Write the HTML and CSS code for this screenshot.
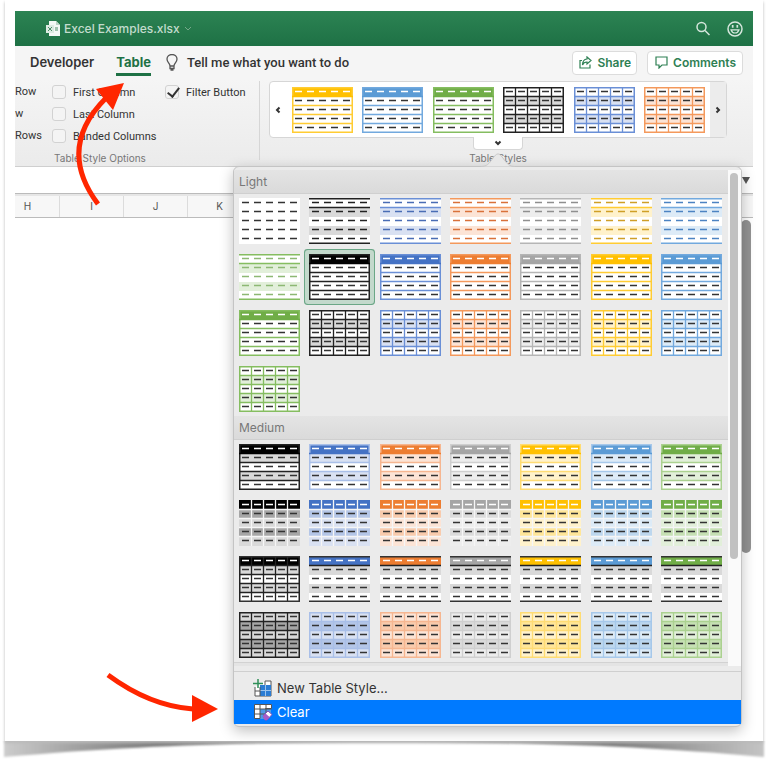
FILE: index.html
```
<!DOCTYPE html>
<html lang="en">
<head>
    <meta charset="UTF-8">
    <meta name="viewport" content="width=device-width, initial-scale=1.0">
    <title>Excel Examples.xlsx</title>
    <link rel="stylesheet" href="styles.css">
</head>
<body>
    <!-- Shared table thumbnail, coloured with CSS variables -->
    <svg class="defs" aria-hidden="true">
        <symbol id="thumb" viewBox="0 0 61 46">
            <rect class="t-head" width="61" height="10"/>
            <path class="t-odd" d="M0 10h61v9H0zM0 28h61v9H0z"/>
            <path class="t-even" d="M0 19h61v9H0zM0 37h61v9H0z"/>
            <path class="t-row" d="M0 18.5h61M0 27.5h61M0 36.5h61"/>
            <path class="t-col" d="M12.5 0v46M24.5 0v46M36.5 0v46M48.5 0v46"/>
            <path class="t-side" d="M.5 0v46M60.5 0v46"/>
            <path class="t-line" d="M0 9.5h61"/>
            <path class="t-edge" d="M0 .5h61M0 45.5h61"/>
            <path class="t-hdash" d="M3 4.5h7M15 4.5h7M27 4.5h7M39 4.5h7M51 4.5h7"/>
            <path class="t-dash" d="M3 13.5h7M15 13.5h7M27 13.5h7M39 13.5h7M51 13.5h7M3 22.5h7M15 22.5h7M27 22.5h7M39 22.5h7M51 22.5h7M3 31.5h7M15 31.5h7M27 31.5h7M39 31.5h7M51 31.5h7M3 40.5h7M15 40.5h7M27 40.5h7M39 40.5h7M51 40.5h7"/>
        </symbol>
    </svg>

    <div class="card">
        <div class="app">
            <header class="titlebar">
                <div class="doc">
                    <svg width="14" height="16" viewBox="0 0 14 16">
                        <path d="M3 0h7l4 4v11H3z" fill="#f3f8f5"/>
                        <path d="M10 0v4h4" fill="#b9d3c4"/>
                        <rect y="4" width="8" height="8" fill="#dbeae1"/>
                        <path d="M2 6l4 4M6 6l-4 4M9 7h3M9 9h3" stroke="#4b8c67" fill="none"/>
                    </svg>
                    <span>Excel Examples.xlsx</span>
                    <svg width="8" height="5" viewBox="0 0 8 5"><path d="M1 1l3 3 3-3" stroke="#76a88a" fill="none"/></svg>
                </div>
                <button class="icon-btn" aria-label="Search">
                    <svg width="16" height="16" viewBox="0 0 16 16" fill="none" stroke="#d5e6dc" stroke-width="1.5"><circle cx="6.5" cy="6" r="4.5"/><path d="M10 9.5l4.500 4.500"/></svg>
                </button>
                <button class="icon-btn" aria-label="Feedback">
                    <svg width="16" height="16" viewBox="0 0 16 16" fill="none" stroke="#d5e6dc" stroke-width="1.5"><circle cx="8" cy="8" r="7"/><path d="M4 8.800q1 3.200 4 3.200t4-3.200z" stroke-width="1.200"/><path d="M5.700 4v2.800M10.300 4v2.800" stroke-width="1.700"/></svg>
                </button>
            </header>

            <nav class="tabs">
                <a href="#" class="tab">Developer</a>
                <a href="#" class="tab active">Table</a>
                <a href="#" class="tell">
                    <svg width="12" height="17" viewBox="0 0 12 17" fill="none" stroke="#555" stroke-width="1.3"><path d="M4 12c0-3-3-3.500-3-7a5 4.500 0 0 1 10 0c0 3.500-3 4-3 7zM4 12v2.500h4V12M4.500 16h3"/></svg>
                    <span>Tell me what you want to do</span>
                </a>
                <button class="pill share">
                    <svg width="13" height="13" viewBox="0 0 13 13" fill="none" stroke="#2f8054" stroke-width="1.200"><path d="M3 4.500H1v7.500h10V8.500"/><path d="M8 1l4 3.500L8 8V6C5.500 6 4.200 7 3.500 9 3.500 5.500 5 3.300 8 3z"/></svg>
                    Share
                </button>
                <button class="pill">
                    <svg width="13" height="13" viewBox="0 0 13 13" fill="none" stroke="#2f8054" stroke-width="1.200"><path d="M1 1h11v8H7l-3 3V9H1z"/></svg>
                    Comments
                </button>
            </nav>

            <div class="ribbon">
                <div class="options">
                    <div class="option-cols">
                        <div class="cut">
                            <span>Row</span>
                            <span>w</span>
                            <span>Rows</span>
                        </div>
                        <div class="checks">
                            <label><input type="checkbox">First Column</label>
                            <label><input type="checkbox">Last Column</label>
                            <label><input type="checkbox">Banded Columns</label>
                        </div>
                        <div class="checks">
                            <label><input type="checkbox" checked>Filter Button</label>
                        </div>
                    </div>
                    <p class="group-name options-name">Table Style Options</p>
                </div>
                <div class="styles">
                    <div class="strip">
                        <button class="scroll-btn" aria-label="Previous"><svg width="6" height="8" viewBox="0 0 6 8"><path d="M4.500 1.500L2 4l2.500 2.500"/></svg></button>
                        <div class="strip-items">
                            <button class="thumb rows gold" aria-label="Gold rows"><svg><use href="#thumb"/></svg></button>
                            <button class="thumb rows sky" aria-label="Sky rows"><svg><use href="#thumb"/></svg></button>
                            <button class="thumb rows green" aria-label="Green rows"><svg><use href="#thumb"/></svg></button>
                            <button class="thumb grid black" aria-label="Black grid"><svg><use href="#thumb"/></svg></button>
                            <button class="thumb grid blue" aria-label="Blue grid"><svg><use href="#thumb"/></svg></button>
                            <button class="thumb grid orange" aria-label="Orange grid"><svg><use href="#thumb"/></svg></button>
                        </div>
                        <button class="scroll-btn next" aria-label="Next"><svg width="6" height="8" viewBox="0 0 6 8"><path d="M1.500 1.500L4 4 1.500 6.500"/></svg></button>
                    </div>
                    <button class="more" aria-label="More styles"><svg width="8" height="6" viewBox="0 0 8 6"><path d="M1.500 1.500L4 4l2.500-2.500"/></svg></button>
                    <p class="group-name">Table Styles</p>
                </div>
            </div>

            <div class="formula">
                <button class="expand" aria-label="Expand formula bar"><svg width="8" height="7" viewBox="0 0 8 7"><path d="M0 0h8L4 7z" fill="#555"/></svg></button>
            </div>
            <div class="columns">
                <span>H</span>
                <span>I</span>
                <span>J</span>
                <span>K</span>
            </div>
            <div class="sheet">
                <div class="sheet-bar"></div>
            </div>

            <!-- Table styles menu -->
            <div class="popup">
                <svg class="pointer" width="34" height="14" viewBox="0 0 34 14"><path d="M0 13.500c6 0 8-3 11-7S15 1 17 1s3 1.500 6 5.500 5 7 11 7" fill="#e8e8e8" stroke="#c9c9c9"/></svg>
                <div class="scroller">
                    <div class="list">
                        <h2>Light</h2>
                        <div class="gallery">
                            <button class="thumb plain black" aria-label="None"><svg><use href="#thumb"/></svg></button>
                            <button class="thumb banded black" aria-label="Light 1"><svg><use href="#thumb"/></svg></button>
                            <button class="thumb banded blue" aria-label="Light 2"><svg><use href="#thumb"/></svg></button>
                            <button class="thumb banded orange" aria-label="Light 3"><svg><use href="#thumb"/></svg></button>
                            <button class="thumb banded gray" aria-label="Light 4"><svg><use href="#thumb"/></svg></button>
                            <button class="thumb banded gold" aria-label="Light 5"><svg><use href="#thumb"/></svg></button>
                            <button class="thumb banded sky" aria-label="Light 6"><svg><use href="#thumb"/></svg></button>
                            <button class="thumb banded green" aria-label="Light 7"><svg><use href="#thumb"/></svg></button>
                            <button class="thumb rows black selected" aria-label="Light 8"><svg><use href="#thumb"/></svg></button>
                            <button class="thumb rows blue" aria-label="Light 9"><svg><use href="#thumb"/></svg></button>
                            <button class="thumb rows orange" aria-label="Light 10"><svg><use href="#thumb"/></svg></button>
                            <button class="thumb rows gray" aria-label="Light 11"><svg><use href="#thumb"/></svg></button>
                            <button class="thumb rows gold" aria-label="Light 12"><svg><use href="#thumb"/></svg></button>
                            <button class="thumb rows sky" aria-label="Light 13"><svg><use href="#thumb"/></svg></button>
                            <button class="thumb rows green" aria-label="Light 14"><svg><use href="#thumb"/></svg></button>
                            <button class="thumb grid black" aria-label="Light 15"><svg><use href="#thumb"/></svg></button>
                            <button class="thumb grid blue" aria-label="Light 16"><svg><use href="#thumb"/></svg></button>
                            <button class="thumb grid orange" aria-label="Light 17"><svg><use href="#thumb"/></svg></button>
                            <button class="thumb grid gray" aria-label="Light 18"><svg><use href="#thumb"/></svg></button>
                            <button class="thumb grid gold" aria-label="Light 19"><svg><use href="#thumb"/></svg></button>
                            <button class="thumb grid sky" aria-label="Light 20"><svg><use href="#thumb"/></svg></button>
                            <button class="thumb grid green" aria-label="Light 21"><svg><use href="#thumb"/></svg></button>
                        </div>
                        <h2>Medium</h2>
                        <div class="gallery">
                            <button class="thumb medium black" aria-label="Medium 1"><svg><use href="#thumb"/></svg></button>
                            <button class="thumb medium blue" aria-label="Medium 2"><svg><use href="#thumb"/></svg></button>
                            <button class="thumb medium orange" aria-label="Medium 3"><svg><use href="#thumb"/></svg></button>
                            <button class="thumb medium gray" aria-label="Medium 4"><svg><use href="#thumb"/></svg></button>
                            <button class="thumb medium gold" aria-label="Medium 5"><svg><use href="#thumb"/></svg></button>
                            <button class="thumb medium sky" aria-label="Medium 6"><svg><use href="#thumb"/></svg></button>
                            <button class="thumb medium green" aria-label="Medium 7"><svg><use href="#thumb"/></svg></button>
                            <button class="thumb tiles black" aria-label="Medium 8"><svg><use href="#thumb"/></svg></button>
                            <button class="thumb tiles blue" aria-label="Medium 9"><svg><use href="#thumb"/></svg></button>
                            <button class="thumb tiles orange" aria-label="Medium 10"><svg><use href="#thumb"/></svg></button>
                            <button class="thumb tiles gray" aria-label="Medium 11"><svg><use href="#thumb"/></svg></button>
                            <button class="thumb tiles gold" aria-label="Medium 12"><svg><use href="#thumb"/></svg></button>
                            <button class="thumb tiles sky" aria-label="Medium 13"><svg><use href="#thumb"/></svg></button>
                            <button class="thumb tiles green" aria-label="Medium 14"><svg><use href="#thumb"/></svg></button>
                            <button class="thumb ruled black" aria-label="Medium 15"><svg><use href="#thumb"/></svg></button>
                            <button class="thumb ruled blue" aria-label="Medium 16"><svg><use href="#thumb"/></svg></button>
                            <button class="thumb ruled orange" aria-label="Medium 17"><svg><use href="#thumb"/></svg></button>
                            <button class="thumb ruled gray" aria-label="Medium 18"><svg><use href="#thumb"/></svg></button>
                            <button class="thumb ruled gold" aria-label="Medium 19"><svg><use href="#thumb"/></svg></button>
                            <button class="thumb ruled sky" aria-label="Medium 20"><svg><use href="#thumb"/></svg></button>
                            <button class="thumb ruled green" aria-label="Medium 21"><svg><use href="#thumb"/></svg></button>
                            <button class="thumb filled black" aria-label="Medium 22"><svg><use href="#thumb"/></svg></button>
                            <button class="thumb filled blue" aria-label="Medium 23"><svg><use href="#thumb"/></svg></button>
                            <button class="thumb filled orange" aria-label="Medium 24"><svg><use href="#thumb"/></svg></button>
                            <button class="thumb filled gray" aria-label="Medium 25"><svg><use href="#thumb"/></svg></button>
                            <button class="thumb filled gold" aria-label="Medium 26"><svg><use href="#thumb"/></svg></button>
                            <button class="thumb filled sky" aria-label="Medium 27"><svg><use href="#thumb"/></svg></button>
                            <button class="thumb filled green" aria-label="Medium 28"><svg><use href="#thumb"/></svg></button>
                        </div>
                        <div class="list-end"></div>
                    </div>
                    <div class="track"><div class="track-thumb"></div></div>
                </div>
                <div class="menu">
                    <button class="menu-item">
                        <svg width="20" height="18" viewBox="0 0 20 18">
                            <path d="M2 8v9h16V2h-6" fill="#fff" stroke="#555"/>
                            <path d="M7 6h11v11H7z" fill="#2b7cd3"/>
                            <path d="M7 11.500h11M12.500 6v11" stroke="#9cc5ee"/>
                            <path d="M2 12h5M7 8v9M12 2v4" stroke="#555"/>
                            <path d="M5 0v9M0 4.500h10" stroke="#2f8f57" stroke-width="1.500"/>
                        </svg>
                        New Table Style...
                    </button>
                    <button class="menu-item current">
                        <svg width="20" height="18" viewBox="0 0 20 18">
                            <path d="M1.500 1.500h17v4h-6v10h-11z" fill="#fff" stroke="#555"/>
                            <path d="M7 6h11v5l-6 5H7z" fill="#4f9be8"/>
                            <path d="M1.500 6h17M1.500 11h11M7 1.500v14M13 1.500v9" stroke="#555"/>
                            <path d="M10 13l5-5 4 3.500-5 5.500h-2z" fill="#fff" stroke="#8a4fb5"/>
                            <path d="M10 13l2.500-2.500 4 3.500-2.500 3h-2z" fill="#a55cc9"/>
                        </svg>
                        Clear
                    </button>
                </div>
            </div>
        </div>

        <svg class="arrow arrow-up" width="50" height="126" viewBox="0 0 50 126">
            <path d="M23 122Q-19 66 31 16" fill="none" stroke="#ff2600" stroke-width="5"/>
            <path d="M49 1L21 7l17 21z" fill="#ff2600"/>
        </svg>
        <svg class="arrow arrow-right" width="114" height="52" viewBox="0 0 114 52">
            <path d="M3 5Q45 36 88 39" fill="none" stroke="#ff2600" stroke-width="5"/>
            <path d="M113 39L87 25v27z" fill="#ff2600"/>
        </svg>
    </div>

    <!-- Curled paper shadow under the card -->
    <svg class="curl" viewBox="0 0 768 19" preserveAspectRatio="none" aria-hidden="true">
        <defs>
            <linearGradient id="curl-fill">
                <stop offset="0" stop-color="#cccccc"/>
                <stop offset=".08" stop-color="#a8a8a8"/>
                <stop offset=".2" stop-color="#787878"/>
                <stop offset=".5" stop-color="#a0a0a0"/>
                <stop offset=".8" stop-color="#787878"/>
                <stop offset=".92" stop-color="#a8a8a8"/>
                <stop offset="1" stop-color="#c4c4c4"/>
            </linearGradient>
            <filter id="soft" x="-5%" y="-50%" width="110%" height="200%"><feGaussianBlur stdDeviation="1"/></filter>
        </defs>
        <path d="M4-4h760v20C620 3 500 1 384 1S150 3 4 16z" fill="url(#curl-fill)" filter="url(#soft)"/>
    </svg>
</body>
</html>
```
FILE: styles.css
```
* {
    box-sizing: border-box;
}

body {
    margin: 0;
    min-height: 100vh;
    display: flex;
    flex-direction: column;
    background: #fff;
    font-family: Inter, "Liberation Sans", sans-serif;
    font-size: 11px;
    color: #333;
}

button {
    font: inherit;
    color: inherit;
    border: none;
    background: none;
    padding: 0;
}

a {
    color: inherit;
    text-decoration: none;
}

svg {
    flex: none;
    display: block;
}

.defs {
    position: absolute;
    width: 0;
    height: 0;
}

.card {
    position: relative;
    flex: 1;
    display: flex;
    margin: 0 5px;
    padding: 11px 10px 0;
    background: #fff;
    box-shadow: 0 2px 3px #bbb;
    z-index: 1;
}

.curl {
    width: 100%;
    height: 19px;
}

.app {
    position: relative;
    flex: 1;
    min-width: 0;
    display: flex;
    flex-direction: column;
}

/* Title bar */
.titlebar {
    display: flex;
    align-items: center;
    gap: 16px;
    height: 35px;
    padding: 0 10px 0 31px;
    background: linear-gradient(#2c8353, #1e7145);
}

.doc {
    flex: 1;
    display: flex;
    align-items: center;
    gap: 4px;
    font-size: 12px;
    font-weight: 500;
    color: #c3dccd;
}

/* Tabs */
.tabs {
    display: flex;
    align-items: center;
    height: 33px;
    padding: 0 10px 0 15px;
    background: #f5f5f5;
    font-size: 13px;
    color: #333;
}

.tab {
    font-weight: 600;
    line-height: 22px;
    border-bottom: 3px solid transparent;
    margin-right: 22px;
    padding-top: 2px;
}

.tab.active {
    color: #1e7145;
    font-weight: 700;
    border-color: #1e7145;
    margin-right: 15px;
}

.tell {
    flex: 1;
    display: flex;
    align-items: center;
    gap: 9px;
    font-family: Roboto, sans-serif;
    font-weight: 500;
    white-space: nowrap;
}

.pill {
    display: flex;
    align-items: center;
    gap: 5px;
    height: 24px;
    padding: 0 6px 0 7px;
    border: 1px solid #dcdcdc;
    border-radius: 4px;
    background: #fff;
    color: #2f8054;
    font-size: 12px;
    font-weight: 600;
}

.share {
    margin-right: 10px;
    padding: 0 5px 0 6px;
}

/* Ribbon */
.ribbon {
    display: flex;
    height: 88px;
    background: linear-gradient(#f5f5f5, #ebebeb);
    border-bottom: 1px solid #cfcfcf;
}

.options {
    width: 245px;
    margin: 2px 9px 6px 0;
    border-right: 1px solid #d6d6d6;
}

.option-cols {
    display: flex;
    height: 66px;
    font-family: Roboto, sans-serif;
}

.cut {
    flex: none;
    width: 37px;
    display: flex;
    flex-direction: column;
    line-height: 22px;
}

.checks {
    flex: none;
    width: 113px;
}

.checks label {
    display: flex;
    align-items: center;
    gap: 7px;
    height: 22px;
    white-space: nowrap;
}

.checks input {
    appearance: none;
    width: 14px;
    height: 14px;
    margin: 0;
    border: 1px solid #d2d2d2;
    border-radius: 3px;
    background: #f4f4f4;
}

.checks input:checked::before {
    content: "";
    display: block;
    width: 5px;
    height: 10px;
    margin: -1px 0 0 4px;
    border: solid #333;
    border-width: 0 2px 2px 0;
    transform: rotate(38deg);
}

.group-name {
    margin: 0;
    line-height: 16px;
    font-size: 10px;
    color: #777;
    text-align: center;
}

.options-name {
    width: 170px;
    padding-top: 3px;
}

.styles {
    flex: 1;
    display: flex;
    flex-direction: column;
    align-items: center;
    margin: 2px 26px 0 0;
}

.strip {
    display: flex;
    align-self: stretch;
    height: 58px;
    border: 1px solid #d6d6d6;
    border-radius: 4px;
    background: #fff;
}

.strip-items {
    flex: 1;
    display: flex;
    align-items: center;
    justify-content: space-between;
    padding: 0 5px 0 6px;
}

.scroll-btn {
    width: 16px;
    display: flex;
    align-items: center;
    justify-content: center;
}

.scroll-btn svg,
.more svg {
    fill: none;
    stroke: #333;
    stroke-width: 2;
}

.next {
    background: #ececec;
}

.more {
    position: relative;
    display: flex;
    align-items: center;
    justify-content: center;
    width: 50px;
    height: 13px;
    margin-top: -1px;
    background: #fff;
    border: 1px solid #d6d6d6;
    border-top: none;
    border-radius: 0 0 4px 4px;
}

/* Worksheet */
.formula {
    display: flex;
    justify-content: flex-end;
    height: 26px;
    padding-right: 3px;
    background: #fff;
}

.columns {
    display: flex;
    height: 25px;
    padding-top: 2px;
    border-top: 1px solid #bbb;
    border-bottom: 1px solid #bbb;
    background: #f7f7f7;
    box-shadow: inset 0 2px #e6e6e6;
    overflow: hidden;
    font-size: 10px;
    color: #555;
}

.columns span {
    width: 64px;
    line-height: 21px;
    text-align: center;
    border-right: 1px solid #dcdcdc;
}

.columns span:first-child {
    margin-left: -19px;
}

.sheet {
    flex: 1;
    display: flex;
    justify-content: flex-end;
    padding: 2px 2px 0 0;
}

.sheet-bar {
    width: 10px;
    height: 333px;
    border-radius: 5px;
    background: #939393;
}

/* Menu */
.popup {
    position: absolute;
    top: 155px;
    left: 218px;
    right: 11px;
    padding: 3px 0 2px;
    background: #ebebeb;
    border: 1px solid #c4c4c4;
    border-radius: 6px;
    box-shadow: 0 4px 14px rgba(0, 0, 0, 0.25);
}

.pointer {
    position: absolute;
    top: -14px;
    left: calc(52% - 17px);
}

.scroller {
    display: flex;
    height: 502px;
    border-bottom: 1px solid #cfcfcf;
    padding-bottom: 5px;
}

.list {
    flex: 1;
    overflow: hidden;
}

.list h2 {
    margin: 0;
    height: 24px;
    padding-left: 5px;
    line-height: 24px;
    font-size: 12px;
    font-weight: 400;
    color: #777;
    background: linear-gradient(#e4e4e4, #dadada);
    border-bottom: 1px solid #cfcfcf;
}

.gallery {
    display: grid;
    grid-template-columns: repeat(7, 61px);
    justify-content: space-between;
    row-gap: 10px;
    padding: 4px 6px 4px 5px;
}

.list-end {
    height: 5px;
    background: #e4e4e4;
    border-top: 1px solid #d2d2d2;
}

.track {
    width: 13px;
    padding: 3px 3px 0 2px;
    background: #fafafa;
}

.track-thumb {
    height: 386px;
    border-radius: 4px;
    background: #c1c1c1;
}

.menu {
    padding-top: 4px;
}

.menu-item {
    display: flex;
    align-items: center;
    gap: 4px;
    width: 100%;
    height: 24px;
    padding-left: 19px;
    font-size: 13px;
}

.menu-item.current {
    background: #007aff;
    color: #fff;
}

/* Thumbnails */
.thumb svg {
    width: 61px;
    height: 46px;
    stroke-width: 1.3;
}

.thumb.selected svg {
    box-shadow: 0 0 0 4px #c3d9cc, 0 0 0 5px #6ba787;
    border-radius: 1px;
}

.t-head { fill: var(--head, #fff); }
.t-odd { fill: var(--odd, #fff); }
.t-even { fill: var(--even, #fff); }
.t-row { stroke: var(--row, none); }
.t-col { stroke: var(--col, none); }
.t-side { stroke: var(--side, none); }
.t-line { stroke: var(--line, none); }
.t-edge { stroke: var(--edge, none); stroke-width: 2; }
.t-side { stroke-width: 2; }
.t-hdash { stroke: var(--hdash, #333); }
.t-dash { stroke: var(--dash, #333); }

.black { --c: #222; --tint: #d9d9d9; --mid: #a6a6a6; --soft: #222; --text: #222; --fill: #000; }
.blue { --c: #6a8fd6; --tint: #d9e1f2; --mid: #b4c6e7; --soft: #a9bfe8; --text: #4a6db5; --fill: #4472c4; }
.orange { --c: #f4995c; --tint: #fce4d6; --mid: #f8cbad; --soft: #f6b690; --text: #d9713a; --fill: #ed7d31; }
.gray { --c: #b5b5b5; --tint: #ededed; --mid: #dbdbdb; --soft: #cfcfcf; --text: #8f8f8f; --fill: #a5a5a5; }
.gold { --c: #ffcc33; --tint: #fff2cc; --mid: #ffe699; --soft: #ffdc73; --text: #cf9f27; --fill: #ffc000; }
.sky { --c: #72a9de; --tint: #ddebf7; --mid: #bdd7ee; --soft: #a6c8ea; --text: #4c83c2; --fill: #5b9bd5; }
.green { --c: #85bd60; --tint: #e2efda; --mid: #c6e0b4; --soft: #abd190; --text: #8db873; --fill: #70ad47; }

.banded {
    --odd: var(--tint);
    --line: var(--c);
    --edge: var(--c);
    --hdash: var(--text);
    --dash: var(--text);
}

.rows {
    --head: var(--fill);
    --row: var(--c);
    --side: var(--c);
    --line: var(--fill);
    --edge: var(--c);
    --hdash: #fff;
}

.grid {
    --odd: var(--tint);
    --row: var(--c);
    --col: var(--c);
    --side: var(--c);
    --line: var(--c);
    --edge: var(--c);
}

.medium {
    --head: var(--fill);
    --odd: var(--tint);
    --row: var(--soft);
    --side: var(--soft);
    --line: var(--fill);
    --edge: var(--soft);
    --hdash: #fff;
}

.tiles {
    --head: var(--fill);
    --odd: var(--mid);
    --even: var(--tint);
    --row: #f6f6f6;
    --col: #f6f6f6;
    --line: #f6f6f6;
    --hdash: #fff;
}

.ruled {
    --head: var(--fill);
    --odd: #d9d9d9;
    --line: #222;
    --edge: #333;
    --hdash: #fff;
}

.ruled.black {
    --row: #222;
    --col: #222;
    --side: #222;
}

.filled {
    --head: var(--tint);
    --odd: var(--mid);
    --even: var(--tint);
    --row: var(--soft);
    --col: var(--soft);
    --side: var(--soft);
    --line: var(--soft);
    --edge: var(--soft);
}

/* Red arrows drawn over the window */
.arrow {
    position: absolute;
}

.arrow-up {
    top: 82px;
    left: 70px;
}

.arrow-right {
    top: 670px;
    left: 100px;
}
```
